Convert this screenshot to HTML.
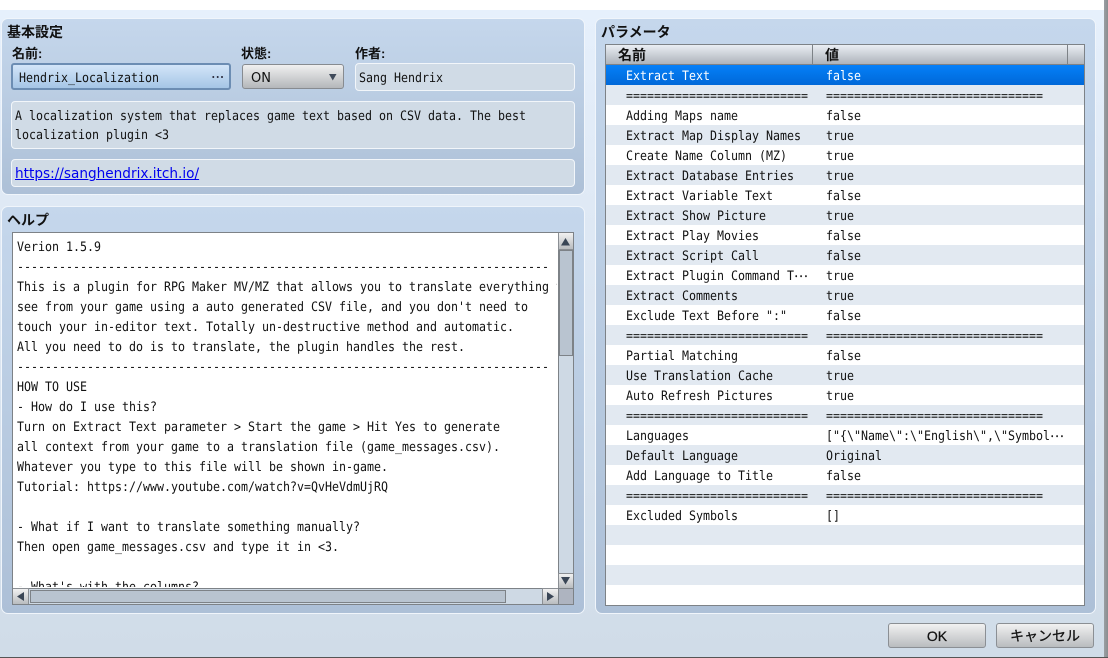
<!DOCTYPE html>
<html><head><meta charset="utf-8"><style>
html,body{margin:0;padding:0;width:1108px;height:658px;overflow:hidden;background:#fff}
*{box-sizing:border-box}
.a{position:absolute}
.m{font-family:"DejaVu Sans Mono","Liberation Mono","Noto Sans CJK JP",monospace;font-size:13px;text-rendering:geometricPrecision;color:#111;white-space:pre;line-height:20px}
.t{transform:scaleX(.8944);transform-origin:0 0}
.j{font-family:"Liberation Sans","Noto Sans CJK JP",sans-serif;font-weight:bold;color:#111;white-space:pre;line-height:16px}
#win{left:0;top:10px;width:1104px;height:647px;background:linear-gradient(#e6f0fc 0,#dfe9f5 30%,#d0dce8 100%)}
.p{border:1px solid #f0f5fb;border-radius:7px;background:linear-gradient(#c5d7ec,#adc0d7)}
.f{background:#d0dbe6;border:1px solid #f2f6fa;border-radius:4px}
.hd{background:linear-gradient(#eaeef3,#adb3ba)}
.sb{background:#ced9e4}
.btn{background:linear-gradient(#f1f1f1,#b9bcbf);border:1px solid #8b8f94;border-radius:2px}
.r{left:606px;width:478px;height:20px}
.r span{position:absolute;top:2px;height:20px;transform:scaleX(.8944);transform-origin:0 0}
.r .n{left:20px}.r .v{left:220px}
.r b{font:14.5px/0 "Noto Sans CJK JP",sans-serif;position:relative;top:-3px}
.s{background:#e2e9f1}
.w{background:#fff}
.tri{position:absolute}
</style></head><body>
<div class="a" style="left:0;top:0;width:1108px;height:10px;background:#fff"></div>
<div class="a" id="win"></div>
<div class="a" style="left:1104px;top:0;width:4px;height:658px;background:linear-gradient(90deg,#9a9ea3,#8a8d90)"></div>
<div class="a" style="left:0;top:657px;width:1108px;height:1px;background:#555"></div>

<div class="a p" style="left:1px;top:18px;width:584px;height:177px"></div>
<div class="a j" style="left:7px;top:24px;font-size:14px">基本設定</div>
<div class="a j" style="left:12px;top:46px;font-size:13px">名前:</div>
<div class="a j" style="left:241px;top:46px;font-size:13px">状態:</div>
<div class="a j" style="left:355px;top:46px;font-size:13px">作者:</div>

<div class="a" style="left:11px;top:63px;width:220px;height:27px;border:2px solid #6c8db3;border-radius:3px;background:linear-gradient(#d3e5f8,#a5c5e6)"></div>
<div class="a m t" style="left:19px;top:69px">Hendrix_Localization</div>
<svg class="tri" style="left:211px;top:75px" width="14" height="4"><circle cx="2.300" cy="2" r="1" fill="#223"/><circle cx="6.700" cy="2" r="1" fill="#223"/><circle cx="11" cy="2" r="1" fill="#223"/></svg>

<div class="a" style="left:242px;top:64px;width:102px;height:25px;border:1px solid #878b90;border-radius:3px;background:linear-gradient(#f0f0f0,#b4b7ba)"></div>
<div class="a" style="left:251px;top:69px;font:13px/20px 'DejaVu Sans',sans-serif;color:#111">ON</div>
<svg class="tri" style="left:329px;top:74px" width="8" height="7"><path d="M0 0H7.500L3.750 6.500Z" fill="#3f4a5a"/></svg>

<div class="a f" style="left:355px;top:63px;width:220px;height:28px"></div>
<div class="a m t" style="left:359px;top:69px">Sang Hendrix</div>

<div class="a f" style="left:11px;top:101px;width:564px;height:48px"></div>
<div class="a m t" style="left:15px;top:107px;line-height:19px">A localization system that replaces game text based on CSV data. The best
localization plugin &lt;3</div>
<div class="a f" style="left:11px;top:159px;width:564px;height:28px"></div>
<div class="a" style="left:15px;top:164px;font:14px/20px 'DejaVu Sans',sans-serif;color:#0000ee;text-decoration:underline;white-space:pre;transform:scaleX(.974);transform-origin:0 0">https://sanghendrix.itch.io/</div>

<div class="a p" style="left:1px;top:206px;width:584px;height:408px"></div>
<div class="a j" style="left:7px;top:212px;font-size:14px">ヘルプ</div>
<div class="a" style="left:12px;top:232px;width:562px;height:373px;border:1px solid #7d8287;background:#fff;overflow:hidden">
<div class="a" style="left:0;top:0;width:544px;height:354px;overflow:hidden"><div class="a m t" style="left:4px;top:5px">Verion 1.5.9
----------------------------------------------------------------------------
This is a plugin for RPG Maker MV/MZ that allows you to translate everything you
see from your game using a auto generated CSV file, and you don't need to
touch your in-editor text. Totally un-destructive method and automatic.
All you need to do is to translate, the plugin handles the rest.
----------------------------------------------------------------------------
HOW TO USE
- How do I use this?
Turn on Extract Text parameter &gt; Start the game &gt; Hit Yes to generate
all context from your game to a translation file (game_messages.csv).
Whatever you type to this file will be shown in-game.
Tutorial: https://www.youtube.com/watch?v=QvHeVdmUjRQ

- What if I want to translate something manually?
Then open game_messages.csv and type it in &lt;3.

- What's with the columns?</div></div>
<div class="a sb" style="left:545px;top:0;width:15px;height:356px;border-left:1px solid #7d8287"></div>
<div class="a btn" style="left:545px;top:0;width:16px;height:17px;border-radius:0;border-width:0 1px 1px 1px"></div>
<svg class="tri" style="left:548px;top:5px" width="10" height="8"><path d="M4.500 0L9 7.500H0Z" fill="#3a4656"/></svg>
<div class="a" style="left:546px;top:17px;width:14px;height:106px;background:#b9c4d0;border:1px solid #7d8287"></div>
<div class="a btn" style="left:545px;top:340px;width:16px;height:16px;border-radius:0;border-width:1px"></div>
<svg class="tri" style="left:548px;top:344px" width="10" height="8"><path d="M0 0H9L4.500 7.500Z" fill="#3a4656"/></svg>
<div class="a sb" style="left:0;top:355px;width:545px;height:16px;border-top:1px solid #7d8287"></div>
<div class="a btn" style="left:0;top:355px;width:16px;height:16px;border-radius:0;border-width:1px 1px 0 0"></div>
<svg class="tri" style="left:4px;top:359px" width="8" height="9"><path d="M0 4.500L7 0V9Z" fill="#3a4656"/></svg>
<div class="a" style="left:17px;top:357px;width:476px;height:13px;background:#b9c4d0;border:1px solid #7d8287"></div>
<div class="a btn" style="left:529px;top:355px;width:16px;height:16px;border-radius:0;border-width:1px 0 0 1px"></div>
<svg class="tri" style="left:534px;top:359px" width="8" height="9"><path d="M7 4.500L0 0V9Z" fill="#3a4656"/></svg>
<div class="a" style="left:545px;top:355px;width:15px;height:16px;background:#aeb4c0;border-top:1px solid #7d8287;border-left:1px solid #7d8287"></div>
</div>

<div class="a p" style="left:595px;top:18px;width:501px;height:596px"></div>
<div class="a j" style="left:601px;top:24px;font-size:14px">パラメータ</div>
<div class="a" style="left:605px;top:44px;width:480px;height:562px;border:1px solid #7d8287;background:#fff"></div>
<div class="a hd" style="left:606px;top:45px;width:478px;height:19px"></div>
<div class="a" style="left:606px;top:64px;width:478px;height:1px;background:#7d8287"></div>
<div class="a" style="left:812px;top:45px;width:1px;height:19px;background:#7d8287"></div>
<div class="a" style="left:1067px;top:45px;width:1px;height:19px;background:#7d8287"></div>
<div class="a j" style="left:618px;top:47px;font-size:14px">名前</div>
<div class="a j" style="left:825px;top:47px;font-size:14px">値</div>

<div class="a r m" style="top:65px;background:linear-gradient(#0580f8,#0068d8);color:#fff"><span class="n">Extract Text</span><span class="v">false</span></div>
<div class="a r m s" style="top:85px"><span class="n">==========================</span><span class="v">===============================</span></div>
<div class="a r m w" style="top:105px"><span class="n">Adding Maps name</span><span class="v">false</span></div>
<div class="a r m s" style="top:125px"><span class="n">Extract Map Display Names</span><span class="v">true</span></div>
<div class="a r m w" style="top:145px"><span class="n">Create Name Column (MZ)</span><span class="v">true</span></div>
<div class="a r m s" style="top:165px"><span class="n">Extract Database Entries</span><span class="v">true</span></div>
<div class="a r m w" style="top:185px"><span class="n">Extract Variable Text</span><span class="v">false</span></div>
<div class="a r m s" style="top:205px"><span class="n">Extract Show Picture</span><span class="v">true</span></div>
<div class="a r m w" style="top:225px"><span class="n">Extract Play Movies</span><span class="v">false</span></div>
<div class="a r m s" style="top:245px"><span class="n">Extract Script Call</span><span class="v">false</span></div>
<div class="a r m w" style="top:265px"><span class="n">Extract Plugin Command T<b>⋯</b></span><span class="v">true</span></div>
<div class="a r m s" style="top:285px"><span class="n">Extract Comments</span><span class="v">true</span></div>
<div class="a r m w" style="top:305px"><span class="n">Exclude Text Before ":"</span><span class="v">false</span></div>
<div class="a r m s" style="top:325px"><span class="n">==========================</span><span class="v">===============================</span></div>
<div class="a r m w" style="top:345px"><span class="n">Partial Matching</span><span class="v">false</span></div>
<div class="a r m s" style="top:365px"><span class="n">Use Translation Cache</span><span class="v">true</span></div>
<div class="a r m w" style="top:385px"><span class="n">Auto Refresh Pictures</span><span class="v">true</span></div>
<div class="a r m s" style="top:405px"><span class="n">==========================</span><span class="v">===============================</span></div>
<div class="a r m w" style="top:425px"><span class="n">Languages</span><span class="v">["{\"Name\":\"English\",\"Symbol<b>⋯</b></span></div>
<div class="a r m s" style="top:445px"><span class="n">Default Language</span><span class="v">Original</span></div>
<div class="a r m w" style="top:465px"><span class="n">Add Language to Title</span><span class="v">false</span></div>
<div class="a r m s" style="top:485px"><span class="n">==========================</span><span class="v">===============================</span></div>
<div class="a r m w" style="top:505px"><span class="n">Excluded Symbols</span><span class="v">[]</span></div>
<div class="a r s" style="top:525px"></div>
<div class="a r s" style="top:565px"></div>

<div class="a btn" style="left:888px;top:623px;width:98px;height:25px;border-radius:3px"></div>
<div class="a" style="left:888px;top:623px;width:98px;height:25px;text-align:center;font:14px/26px 'Liberation Sans',sans-serif;color:#111;-webkit-text-stroke:.25px #111">OK</div>
<div class="a btn" style="left:996px;top:623px;width:98px;height:25px;border-radius:3px"></div>
<div class="a" style="left:996px;top:623px;width:98px;height:25px;text-align:center;font:14px/26px 'Liberation Sans','Noto Sans CJK JP',sans-serif;color:#111;-webkit-text-stroke:.25px #111">キャンセル</div>
</body></html>
